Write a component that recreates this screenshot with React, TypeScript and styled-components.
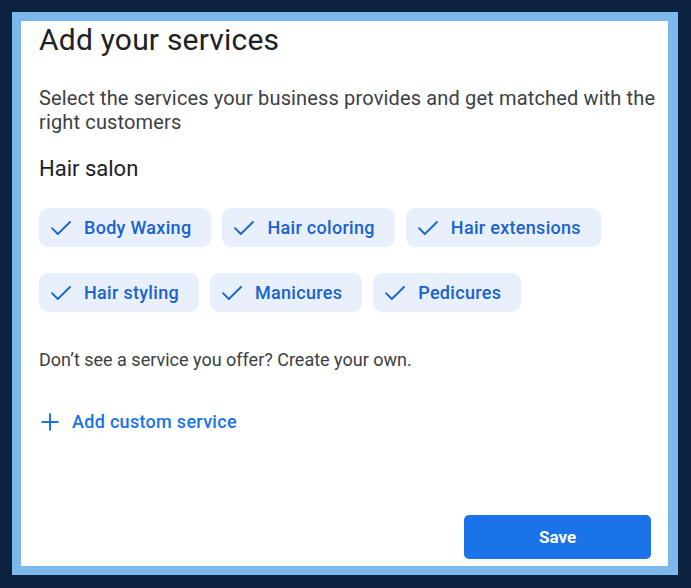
import React from 'react'
import styled, { createGlobalStyle } from 'styled-components'

const GlobalStyle = createGlobalStyle`
  html, body {
    margin: 0;
    padding: 0;
    background: #0b2340;
  }
  * {
    box-sizing: border-box;
  }
`

const Frame = styled.div`
  width: 691px;
  height: 588px;
  padding: 12px 13px 13px 12px;
  background: #0b2340;
`

const Outline = styled.div`
  height: 100%;
  border: 9px solid #7cb8ec;
  border-right-width: 10px;
  background: #ffffff;
`

const Panel = styled.div`
  height: 100%;
  display: flex;
  flex-direction: column;
  padding: 0 17px 7px 18px;
  font-family: Roboto, 'Liberation Sans', sans-serif;
`

const Title = styled.h1`
  margin: 0;
  font-size: 30px;
  font-weight: 400;
  line-height: 38px;
  letter-spacing: 0.2px;
  color: #202124;
`

const Lead = styled.p`
  margin: 27px -12px 0 0;
  font-size: 20px;
  line-height: 24px;
  letter-spacing: 0.15px;
  color: #3c4043;
`

const Category = styled.h2`
  margin: 21px 0 0;
  font-size: 22px;
  font-weight: 400;
  line-height: 28px;
  color: #202124;
`

const ChipRow = styled.div<{ $first?: boolean }>`
  display: flex;
  gap: 11px;
  margin-top: ${(p) => (p.$first ? '25px' : '26px')};
`

const Chip = styled.button`
  display: flex;
  align-items: center;
  gap: 13px;
  height: 39px;
  padding: 0 20px 0 12px;
  border: none;
  border-radius: 9px;
  background: #e8f0fe;
  color: #1a62cc;
  font-family: Roboto, 'Liberation Sans', sans-serif;
  font-size: 18px;
  font-weight: 500;
  letter-spacing: 0.3px;
  cursor: pointer;
`

const Hint = styled.p`
  margin: 36px 0 0;
  font-size: 18px;
  line-height: 24px;
  color: #3c4043;
`

const AddLink = styled.button`
  display: flex;
  align-items: center;
  gap: 13px;
  align-self: flex-start;
  margin-top: 38px;
  padding: 0 0 0 2px;
  border: none;
  background: none;
  color: #1a73e8;
  font-family: Roboto, 'Liberation Sans', sans-serif;
  font-size: 18px;
  font-weight: 500;
  letter-spacing: 0.3px;
  line-height: 24px;
  cursor: pointer;
`

const Footer = styled.div`
  margin-top: auto;
  display: flex;
  justify-content: flex-end;
`

const SaveButton = styled.button`
  width: 187px;
  height: 44px;
  border: none;
  border-radius: 5px;
  background: #1a73e8;
  color: #ffffff;
  font-family: Roboto, 'Liberation Sans', sans-serif;
  font-size: 17px;
  font-weight: 700;
  cursor: pointer;
`

const Check = () => (
  <svg width="20" height="14" viewBox="0 0 20 14" fill="none">
    <path
      d="M1 7.2 6.8 13 19 1"
      stroke="#1a62cc"
      strokeWidth="1.8"
      strokeLinecap="round"
      strokeLinejoin="round"
    />
  </svg>
)

const Plus = () => (
  <svg width="18" height="18" viewBox="0 0 18 18" fill="none">
    <path d="M0.5 9h17M9 0.5v17" stroke="#1a73e8" strokeWidth="2" />
  </svg>
)

const rows = [
  ['Body Waxing', 'Hair coloring', 'Hair extensions'],
  ['Hair styling', 'Manicures', 'Pedicures'],
]

export default function App() {
  return (
    <>
      <GlobalStyle />
      <Frame>
        <Outline>
          <Panel>
            <Title>Add your services</Title>
            <Lead>
              Select the services your business provides and get matched with the right
              customers
            </Lead>
            <Category>Hair salon</Category>
            {rows.map((row, i) => (
              <ChipRow key={i} $first={i === 0}>
                {row.map((name) => (
                  <Chip key={name}>
                    <Check />
                    {name}
                  </Chip>
                ))}
              </ChipRow>
            ))}
            <Hint>Don’t see a service you offer? Create your own.</Hint>
            <AddLink>
              <Plus />
              Add custom service
            </AddLink>
            <Footer>
              <SaveButton>Save</SaveButton>
            </Footer>
          </Panel>
        </Outline>
      </Frame>
    </>
  )
}
